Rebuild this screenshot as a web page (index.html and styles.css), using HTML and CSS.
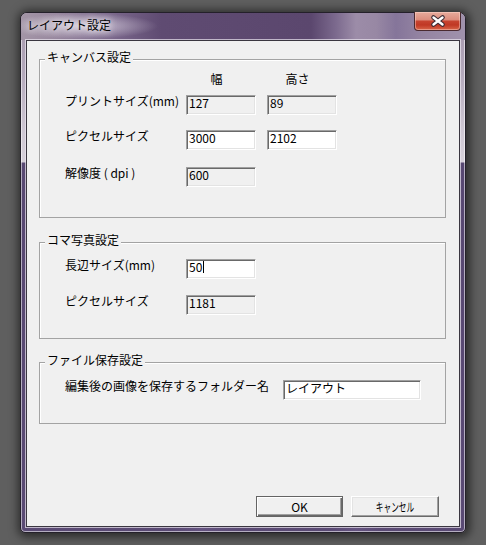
FILE: index.html
```html
<!DOCTYPE html>
<html lang="ja">
<head>
<meta charset="utf-8">
<title>レイアウト設定</title>
<link rel="stylesheet" href="styles.css">
</head>
<body>
<div class="window">
  <div class="titlebar">
    <span class="title">レイアウト設定</span>
    <div class="close">
      <svg width="45" height="17" viewBox="0 0 45 17">
        <path d="M18.5 4.5 L27.5 11.5 M27.5 4.5 L18.5 11.5" stroke="#3b2b33" stroke-width="4.6" stroke-linecap="round" fill="none"/>
        <path d="M18.5 4.5 L27.5 11.5 M27.5 4.5 L18.5 11.5" stroke="#ffffff" stroke-width="2.4" stroke-linecap="round" fill="none"/>
      </svg>
    </div>
  </div>
  <div class="client">
    <div class="group g1">
      <span class="legend">キャンバス設定</span>
      <div class="row head">
        <span class="label"></span>
        <span class="colhead">幅</span>
        <span class="colhead second">高さ</span>
      </div>
      <div class="row r1">
        <span class="label">プリントサイズ(mm)</span>
        <div class="edit ro">127</div>
        <div class="edit ro second">89</div>
      </div>
      <div class="row r2">
        <span class="label">ピクセルサイズ</span>
        <div class="edit">3000</div>
        <div class="edit second">2102</div>
      </div>
      <div class="row r3">
        <span class="label">解像度 ( dpi )</span>
        <div class="edit ro">600</div>
      </div>
    </div>

    <div class="group g2">
      <span class="legend">コマ写真設定</span>
      <div class="row">
        <span class="label">長辺サイズ(mm)</span>
        <div class="edit">50<span class="caret"></span></div>
      </div>
      <div class="row r2b">
        <span class="label">ピクセルサイズ</span>
        <div class="edit ro">1181</div>
      </div>
    </div>

    <div class="group g3">
      <span class="legend">ファイル保存設定</span>
      <div class="row">
        <span class="label wide">編集後の画像を保存するフォルダー名</span>
        <div class="edit long">レイアウト</div>
      </div>
    </div>

    <div class="buttons">
      <button class="btn default" type="button">OK</button>
      <button class="btn cancel" type="button"><span class="narrow">キャンセル</span></button>
    </div>
  </div>
</div>
</body>
</html>
```

FILE: styles.css
```css
html, body {
  margin: 0;
  padding: 0;
}
body {
  width: 486px;
  height: 545px;
  overflow: hidden;
  background: #5f5f5f;
  font-family: "Noto Sans CJK JP", "Noto Sans", sans-serif;
  font-size: 12px;
  color: #000;
}
.window {
  box-sizing: border-box;
  width: 446px;
  height: 521px;
  margin: 12px 0 0 20px;
  border: 1px solid #24202a;
  border-radius: 7px 7px 5px 5px;
  padding: 0 5px 5px 5px;
  display: flex;
  flex-direction: column;
  background:
    linear-gradient(to right, rgba(255,255,255,0) 0, rgba(255,255,255,0) 150px, rgba(120,100,150,.35) 180px, rgba(255,255,255,0) 220px, rgba(255,255,255,0) 310px, rgba(120,100,150,.35) 335px, rgba(255,255,255,0) 360px) bottom / 100% 6px no-repeat,
    linear-gradient(to bottom, #a596ab 0, #b4a9bc 60px, #cfc8d4 120px, #d6d0da 149px, #584872 150px, #5a4a74 100%);
  box-shadow: inset 0 0 0 1px rgba(255,255,255,.55), 1px 1px 10px 3px rgba(0,0,0,.55);
}
.titlebar {
  height: 27px;
  margin: 0 -5px;
  padding: 0 0 0 6px;
  display: flex;
  justify-content: space-between;
  align-items: flex-start;
  border-radius: 6px 6px 0 0;
  background:
    radial-gradient(ellipse 75px 13px at 62px 13px, rgba(235,230,240,.75), rgba(235,230,240,0)),
    linear-gradient(to right, #a395a6 0, #9a8aa0 30px, #7b688c 90px, #5f4b72 140px, #5b476e 290px, #7c6a8e 315px, #9c8ca8 335px, #9888a4 355px, #85759a 375px, #9484a2 400px, #a092ac 444px);
}
.title {
  margin-top: 5px;
  line-height: 14px;
  color: #000;
  text-shadow: 0 0 6px rgba(255,255,255,.9), 0 0 10px rgba(255,255,255,.7);
}
.close {
  box-sizing: border-box;
  width: 47px;
  height: 19px;
  margin: -1px 4px 0 0;
  border: 1px solid #4a2a30;
  border-top: none;
  border-radius: 0 0 4px 4px;
  background: linear-gradient(to bottom, #e7ab9c 0%, #dc8e7e 42%, #c6432f 52%, #c03824 72%, #d8664a 100%);
  box-shadow: inset 0 0 0 1px rgba(255,220,210,.45);
  display: flex;
  align-items: center;
  justify-content: center;
}
.close svg {
  display: block;
}
.client {
  box-sizing: border-box;
  height: 487px;
  border: 1px solid #3a3640;
  box-shadow: 0 0 0 1px rgba(235,230,240,.7);
  background: #f0f0f0;
  display: flex;
  flex-direction: column;
}
.group {
  position: relative;
  margin: 0 13px 0 12px;
  border: 1px solid #a3a3a3;
  box-shadow: inset 1px 1px 0 #fff;
}
.g1 {
  margin-top: 18px;
  padding: 12px 0 30px 25px;
}
.g2 {
  margin-top: 24px;
  padding: 16px 0 23px 25px;
}
.g3 {
  margin-top: 23px;
  padding: 17px 0 23px 25px;
}
.legend {
  position: absolute;
  top: -10px;
  left: 5px;
  padding: 0 2px;
  line-height: 14px;
  background: #f0f0f0;
}
.row {
  display: flex;
  align-items: flex-start;
}
.head {
  margin-bottom: 9px;
}
.r2 {
  margin-top: 15px;
}
.r3 {
  margin-top: 17px;
}
.r2b {
  margin-top: 16px;
}
.label {
  width: 121px;
  flex: none;
  line-height: 12px;
  white-space: nowrap;
}
.label.wide {
  width: 218px;
}
.colhead {
  box-sizing: border-box;
  width: 70px;
  padding-right: 9px;
  text-align: center;
  line-height: 14px;
}
.second {
  margin-left: 11px;
}
.edit {
  box-sizing: border-box;
  width: 70px;
  height: 20px;
  padding: 0 2px;
  line-height: 13px;
  background: #fff;
  border-style: solid;
  border-width: 1px;
  border-color: #a0a0a0 #ffffff #ffffff #a0a0a0;
  box-shadow: inset 1px 1px 0 #696969, inset -1px -1px 0 #e3e3e3;
  white-space: nowrap;
}
.edit.ro {
  background: #f0f0f0;
}
.edit.long {
  width: 138px;
}
.caret {
  display: inline-block;
  width: 1px;
  height: 12px;
  margin-left: 1px;
  background: #000;
  vertical-align: -1px;
}
.buttons {
  margin-top: auto;
  margin-bottom: 9px;
  padding-right: 20px;
  display: flex;
  justify-content: flex-end;
  gap: 8px;
}
.btn {
  box-sizing: border-box;
  height: 21px;
  width: 88px;
  padding: 0;
  margin: 0;
  font-family: "Noto Sans CJK JP", "Noto Sans", sans-serif;
  font-size: 12px;
  line-height: 14px;
  color: #000;
  background: #f0f0f0;
  border: 1px solid;
  border-color: #ffffff #696969 #696969 #ffffff;
  box-shadow: inset -1px -1px 0 #a0a0a0, inset 1px 1px 0 #e3e3e3;
}
.btn.default {
  width: 87px;
  border-color: #646464;
  box-shadow: inset 1px 1px 0 #ffffff, inset -1px -1px 0 #696969, inset -2px -2px 0 #a0a0a0;
}
.narrow {
  display: inline-block;
  transform: scaleX(0.64);
  white-space: nowrap;
}
```
